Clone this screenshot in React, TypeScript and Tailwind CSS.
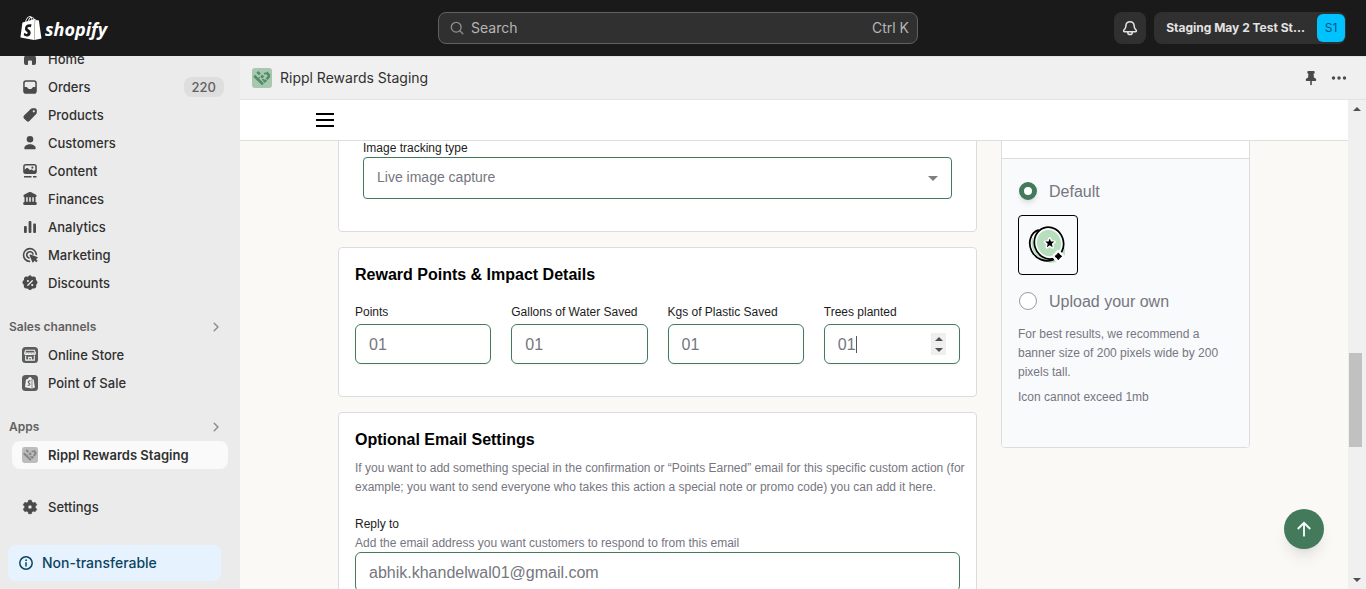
import React, { ReactNode } from "react";
import { SiShopify } from "react-icons/si";

const inter = "font-['Inter',sans-serif]";
const body = "font-['Liberation_Sans',Arial,sans-serif]";

function Glyph({ children }: { children: ReactNode }) {
  return (
    <svg viewBox="0 0 20 20" className="size-5 shrink-0" fill="#4a4a4a" aria-hidden="true">
      {children}
    </svg>
  );
}

const icons = {
  home: (
    <Glyph>
      <path d="M9 3.600a1.500 1.500 0 0 1 2 0l4.300 3.600c.5.400.7 1 .7 1.600V14a2 2 0 0 1-2 2h-1.300a.7.700 0 0 1-.7-.700V12.500a1 1 0 0 0-1-1H9a1 1 0 0 0-1 1v2.800a.7.700 0 0 1-.7.700H6a2 2 0 0 1-2-2V8.800c0-.600.2-1.200.7-1.600z" />
    </Glyph>
  ),
  orders: (
    <Glyph>
      <path
        fillRule="evenodd"
        d="M6 3.300h8A2.800 2.800 0 0 1 16.800 6.100V13.900A2.800 2.800 0 0 1 14 16.700H6A2.800 2.800 0 0 1 3.200 13.900V6.100A2.800 2.800 0 0 1 6 3.300zM6.100 4.800A1.400 1.400 0 0 0 4.700 6.200V10H6.500C7.600 10 7.800 11.900 8.900 11.900H11.100C12.200 11.900 12.400 10 13.500 10H15.300V6.200A1.400 1.400 0 0 0 13.900 4.800z"
      />
    </Glyph>
  ),
  products: (
    <Glyph>
      <path
        fillRule="evenodd"
        d="M11 3.800c.4-.4.900-.6 1.500-.6h2.400c1.100 0 1.900.8 1.900 1.900v2.400c0 .6-.2 1.100-.6 1.500l-6.800 7a2 2 0 0 1-2.800 0L4 13.400a2 2 0 0 1 0-2.800zM13.800 7.400a1.100 1.100 0 1 0 0-2.200 1.100 1.100 0 0 0 0 2.200z"
      />
    </Glyph>
  ),
  customers: (
    <Glyph>
      <circle cx="10" cy="6.300" r="3.300" />
      <path d="M4.300 15.200c0-2.400 2.800-4 5.700-4s5.700 1.600 5.700 4c0 .6-.4 1-1 1H5.300c-.6 0-1-.4-1-1z" />
    </Glyph>
  ),
  content: (
    <Glyph>
      <path
        fillRule="evenodd"
        d="M5.700 3h8.600a2.500 2.500 0 0 1 2.500 2.500v5a2.500 2.500 0 0 1-2.500 2.500H5.700a2.500 2.500 0 0 1-2.500-2.500v-5A2.500 2.500 0 0 1 5.700 3zm0 1.500c-.6 0-1 .4-1 1v3.200l1.800-1.600c.4-.3.900-.3 1.300 0L10 9.300l.9-.7c.4-.3 1-.3 1.400.1l.8.7c.8.500 1.500.1 2.200-.3V5.500c0-.6-.4-1-1-1z"
      />
      <circle cx="12.400" cy="6.600" r="1.100" />
      <path d="M4 14.900h7.500v1.500H4zM13 14.900h3.500v1.500H13z" />
    </Glyph>
  ),
  finances: (
    <Glyph>
      <path d="M9.300 3.100a1.600 1.600 0 0 1 1.400 0l4.900 2.300c.6.300 1 .8 1 1.400 0 .8-.6 1.400-1.400 1.400H4.800c-.8 0-1.400-.6-1.400-1.400 0-.6.400-1.100 1-1.400z" />
      <path d="M4.500 8h1.700v5H4.500zM7.700 8h1.500v5H7.700zM10.800 8h1.500v5h-1.500zM13.800 8h1.700v5h-1.700zM4.500 12.700h11c.7 0 1.300.9 1.300 1.900 0 .8-.4 1.400-1 1.400H4.200c-.6 0-1-.6-1-1.400 0-1 .6-1.900 1.300-1.900z" />
    </Glyph>
  ),
  analytics: (
    <Glyph>
      <rect x="4" y="9" width="2.800" height="7" rx="1" />
      <rect x="8.600" y="4" width="2.800" height="12" rx="1" />
      <rect x="13.200" y="6.500" width="2.800" height="9.500" rx="1" />
    </Glyph>
  ),
  marketing: (
    <Glyph>
      <path
        d="M16.300 9.500A6.400 6.400 0 1 0 9.500 16.400M13 9A3.200 3.200 0 1 0 9 13"
        fill="none"
        stroke="#4a4a4a"
        strokeWidth="1.600"
        strokeLinecap="round"
      />
      <path d="M9.600 10.500c-.2-.5.300-1.100.9-.9l6.800 2.300c.7.200.7 1.100.1 1.400l-1.400.7 1.700 1.700-1.600 1.600-1.700-1.700-.7 1.400c-.3.600-1.200.6-1.400-.1z" />
    </Glyph>
  ),
  discounts: (
    <Glyph>
      <path d="M8.300 3.400a2.200 2.200 0 0 1 3.400 0l.6.300.8-.1a2.200 2.200 0 0 1 2.800 2.600l.1.800.5.500a2.300 2.300 0 0 1 .2 3.600l-.4.600-.1 1a2.200 2.200 0 0 1-2.700 2.700l-1 .1-.6.500a2.300 2.300 0 0 1-3.800 0l-.6-.5-1-.1a2.200 2.200 0 0 1-2.600-2.700l-.2-1-.5-.600a2.300 2.300 0 0 1 .2-3.600l.5-.5.1-.8a2.200 2.200 0 0 1 2.700-2.600l.8.1z" />
      <path d="M7.800 12.300l4.500-4.600" stroke="#ebebeb" strokeWidth="1.300" strokeLinecap="round" />
      <circle cx="7.900" cy="8" r="1.050" fill="#ebebeb" />
      <circle cx="12.200" cy="12.100" r="1.050" fill="#ebebeb" />
    </Glyph>
  ),
  store: (
    <Glyph>
      <rect x="2" y="2" width="16" height="16" rx="3.500" fill="#5a5c5e" />
      <path
        d="M5.600 5.200h8.800l1 3c0 1.800-2.700 1.800-2.700 0 0 1.800-2.700 1.800-2.700 0 0 1.800-2.700 1.800-2.700 0 0 1.800-2.700 1.800-2.700 0zM5.700 10.500v4.600h8.600v-4.600M8.700 15v-2.600h2.600V15M5 8h10"
        fill="none"
        stroke="#f1f1f1"
        strokeWidth="1.100"
      />
    </Glyph>
  ),
  pos: (
    <Glyph>
      <rect x="2" y="2" width="16" height="16" rx="3.500" fill="#5a5c5e" />
      <path d="M6 6.500l2-.5c.5-2 3-2.700 3.600-.8l.6.800 1.400.4 1.300 8.200-3 .9-6.900-1.200z" fill="#f1f1f1" />
      <path
        d="M10.600 8.100c-1.400-.6-2.500.1-2.300 1.100.2 1 1.900 1.100 1.700 2.300-.2 1-1.500 1-2.300.3"
        fill="none"
        stroke="#5a5c5e"
        strokeWidth="1.100"
      />
      <path d="M12 6v9" stroke="#5a5c5e" strokeWidth=".7" />
    </Glyph>
  ),
  settings: (
    <Glyph>
      <path
        fillRule="evenodd"
        d="M8.700 3.300h2.600l.6 2 1.300.7 2-.5 1.500 2.300-1.400 1.500v1.400l1.400 1.500-1.500 2.300-2-.5-1.300.7-.6 2H8.700l-.6-2-1.300-.7-2 .5-1.500-2.300 1.400-1.500V9.300L3.300 7.800l1.500-2.300 2 .5 1.300-.7zM10 12.100a2.100 2.100 0 1 0 0-4.200 2.100 2.100 0 0 0 0 4.200z"
        stroke="#4a4a4a"
        strokeWidth=".8"
        strokeLinejoin="round"
      />
    </Glyph>
  ),
};

function RipplMark({ bg, fg, className }: { bg: string; fg: string; className: string }) {
  return (
    <svg viewBox="0 0 20 20" className={className} aria-hidden="true">
      <rect width="20" height="20" rx="3" fill={bg} />
      <g fill="none" stroke={fg} strokeWidth="2.600">
        <path d="M2.200 7.800l8.800 8.600M5.300 3.800l2.600 2.600M11.800 14.200l2.400-2.400M14.800 11.200l2.600-3.400M14.400 4.300l3.200 3.600" />
      </g>
      <g fill={fg}>
        <circle cx="10.200" cy="8.600" r="1.600" />
        <circle cx="12.900" cy="5.600" r="1.100" />
        <circle cx="7.300" cy="9.800" r=".8" />
        <circle cx="11" cy="11.800" r="1" />
      </g>
    </svg>
  );
}

function NavItem({ icon, label, badge, active }: { icon: ReactNode; label: string; badge?: string; active?: boolean }) {
  return (
    <li className="px-3">
      <a
        href="#"
        className={
          active
            ? "flex h-7 items-center gap-2 rounded-lg bg-[#fafafa] pl-2 pr-1 font-semibold"
            : "flex h-7 items-center gap-2 rounded-lg pl-2 pr-1 font-medium"
        }
      >
        {icon}
        <span className="flex-1 pt-0.5">{label}</span>
        {badge && <span className="h-5 rounded-lg bg-[#dedede] px-2 leading-5 font-medium text-[#616161]">{badge}</span>}
      </a>
    </li>
  );
}

function SectionHeader({ label }: { label: string }) {
  return (
    <a href="#" className="mt-4 flex h-7 items-center justify-between pr-[19px] pl-[9px] text-xs font-semibold text-[#616161]">
      {label}
      <svg viewBox="0 0 10 10" className="size-2.5" fill="none" stroke="#8a8a8a" strokeWidth="1.400" strokeLinecap="round" strokeLinejoin="round" aria-hidden="true">
        <path d="M3.200 1.200L7 5 3.200 8.800" />
      </svg>
    </a>
  );
}

function TopBar() {
  return (
    <header className="grid h-14 shrink-0 grid-cols-[1fr_480px_1fr] items-center bg-[#1a1a1a] pr-2.5">
      <a href="#" aria-label="Shopify home" className="ml-[19px] flex w-fit items-center gap-0.5 text-white">
        <SiShopify className="size-6" />
        <span className="pt-px font-['Open_Sans',sans-serif] text-lg leading-6 font-bold italic">shopify</span>
      </a>
      <label className="flex h-8 items-center rounded-lg border border-[#616161] bg-[#303030] px-2">
        <svg viewBox="0 0 20 20" className="size-5" fill="none" stroke="#8f8f8f" strokeWidth="1.300" strokeLinecap="round" aria-hidden="true">
          <circle cx="9.200" cy="9.200" r="4.900" />
          <path d="M12.800 12.800l3 3" />
        </svg>
        <input type="search" aria-label="Search" placeholder="Search" className="ml-1 min-w-0 flex-1 bg-transparent text-sm text-white outline-none placeholder:text-[#b5b5b5]" />
        <kbd className="font-['Inter',sans-serif] text-sm text-[#b5b5b5]">Ctrl K</kbd>
      </label>
      <div className="flex items-center justify-end gap-2 pr-2.5">
        <button type="button" aria-label="Notifications" className="flex size-8 items-center justify-center rounded-lg bg-[#303030]">
          <svg viewBox="0 0 20 20" className="size-5" fill="none" stroke="#e3e3e3" strokeWidth="1.500" strokeLinejoin="round" aria-hidden="true">
            <path d="M10 3.700c-2.500 0-3.900 1.700-4.100 3.900-.1 1.800-.3 2.600-1.300 3.700l-.7.800c-.6.700-.2 1.700.7 1.700h10.800c.9 0 1.300-1 .7-1.700l-.7-.8c-1-1.100-1.200-1.900-1.300-3.700-.2-2.200-1.600-3.900-4.100-3.900z" />
            <path d="M7.800 14v.4c0 1.200 1 2.100 2.200 2.100s2.200-.9 2.200-2.100V14" />
          </svg>
        </button>
        <button type="button" className="flex h-8 items-center gap-3 rounded-lg bg-[#303030] pr-px pl-3 text-[#e3e3e3]">
          <span className="text-xs font-bold">Staging May 2 Test St...</span>
          <span className="flex size-7 items-center justify-center rounded-md bg-[#00c2ff] text-xs text-[#00527c]">S1</span>
        </button>
      </div>
    </header>
  );
}

function Sidebar() {
  return (
    <nav aria-label="Main" className="w-60 shrink-0 overflow-hidden bg-[#ebebeb] text-[13px] text-[#303030]">
      <ul className="-mt-[11px]">
        <NavItem icon={icons.home} label="Home" />
        <NavItem icon={icons.orders} label="Orders" badge="220" />
        <NavItem icon={icons.products} label="Products" />
        <NavItem icon={icons.customers} label="Customers" />
        <NavItem icon={icons.content} label="Content" />
        <NavItem icon={icons.finances} label="Finances" />
        <NavItem icon={icons.analytics} label="Analytics" />
        <NavItem icon={icons.marketing} label="Marketing" />
        <NavItem icon={icons.discounts} label="Discounts" />
      </ul>
      <SectionHeader label="Sales channels" />
      <ul>
        <NavItem icon={icons.store} label="Online Store" />
        <NavItem icon={icons.pos} label="Point of Sale" />
      </ul>
      <SectionHeader label="Apps" />
      <ul>
        <NavItem active icon={<RipplMark bg="#bdbdbd" fg="#858585" className="mx-0.5 size-4" />} label="Rippl Rewards Staging" />
      </ul>
      <ul className="mt-6">
        <NavItem icon={icons.settings} label="Settings" />
      </ul>
      <div className="mt-6 mr-[19px] ml-2 flex h-9 items-center gap-1.5 rounded-lg bg-[#e6f3ff] pl-2 text-sm font-medium text-[#0b4461]">
        <svg viewBox="0 0 20 20" className="size-5" fill="none" stroke="#0b4461" strokeWidth="1.500" strokeLinecap="round" aria-hidden="true">
          <circle cx="10" cy="10" r="6.200" />
          <path d="M10 9.700v3.300" />
          <circle cx="10" cy="7.200" r=".5" fill="#0b4461" strokeWidth=".8" />
        </svg>
        Non-transferable
      </div>
    </nav>
  );
}

const cardClass = "rounded border border-[#dcdcde] bg-white";
const fieldClass =
  "block h-10 w-full appearance-none rounded-md border border-[#427a5b] bg-white px-[13px] pt-0.5 text-base text-[#767680] outline-none";

const impactFields = [
  { id: "points", label: "Points" },
  { id: "water", label: "Gallons of Water Saved" },
  { id: "plastic", label: "Kgs of Plastic Saved" },
  { id: "trees", label: "Trees planted", editing: true },
];

function ImpactField({ id, label, editing }: { id: string; label: string; editing?: boolean }) {
  return (
    <div>
      <label htmlFor={id} className="mb-[3px] block text-xs leading-[18px] text-[#1c1c22]">
        {label}
      </label>
      <div className="relative">
        <input
          id={id}
          type="number"
          defaultValue="01"
          className={`${fieldClass} shadow-xs [&::-webkit-inner-spin-button]:appearance-none`}
        />
        {editing && (
          <>
            <span className="absolute top-3 left-8 h-[17px] w-px bg-[#55555d]" aria-hidden="true" />
            <span className="absolute top-[9px] right-3.5 flex w-[15px] flex-col bg-[#efefef]">
              <button type="button" aria-label="Increase" className="flex h-[11px] items-center justify-center">
                <svg viewBox="0 0 8 4" className="h-1 w-2" fill="#505050"><path d="M0 4l4-4 4 4z" /></svg>
              </button>
              <button type="button" aria-label="Decrease" className="flex h-[11px] items-center justify-center">
                <svg viewBox="0 0 8 4" className="h-1 w-2" fill="#505050"><path d="M0 0l4 4 4-4z" /></svg>
              </button>
            </span>
          </>
        )}
      </div>
    </div>
  );
}

function CoinArt() {
  return (
    <svg viewBox="0 0 60 60" className="size-full" aria-hidden="true">
      <ellipse cx="31.500" cy="28.500" rx="14" ry="15" fill="#b7dfbd" />
      <path d="M14 22c-3 9 1 18 9 22l9 4.500 7-1-5-3c-11 0-18-8-19-19z" fill="#b7dfbd" />
      <path d="M44.500 38l3-5v8z" fill="#b7dfbd" />
      <ellipse cx="31" cy="28" rx="13.600" ry="15" transform="rotate(-18 31 28)" fill="none" stroke="#f9fafc" strokeWidth="2.500" />
      <g fill="none" stroke="#000" strokeWidth="1.800">
        <ellipse cx="31" cy="28" rx="15" ry="16.600" transform="rotate(-18 31 28)" />
        <path d="M20.500 14.300C11.500 17 9 28 13 36c4.500 9 14 12.500 23.500 9" />
      </g>
      <path
        d="M31.800 23.300l1.500 2.900 3.300.5-2.300 2.300.5 3.300-3-1.500-3 1.500.5-3.300-2.300-2.300 3.300-.5z"
        fill="#f9fafc"
        stroke="#f9fafc"
        strokeWidth="3"
        strokeLinejoin="round"
      />
      <path d="M31.800 23.200l1.200 3.100 3.500.2-2.600 2.300.9 3.500-3-2-3 2 .9-3.500-2.600-2.300 3.500-.2z" fill="#000" />
      <path d="M40.700 37l4.500 4.700-4.500 4.700-4.500-4.700z" fill="#f9fafc" stroke="#f9fafc" strokeWidth="4" strokeLinejoin="round" />
      <path d="M40.700 38.200l1.500 2 2 1.500-2 1.500-1.500 2-1.500-2-2-1.500 2-1.500z" fill="#000" stroke="#000" strokeWidth="1" strokeLinejoin="round" />
    </svg>
  );
}

const radioClass =
  "mx-px size-[18px] appearance-none rounded-full border border-[#9a9aa0] bg-white checked:border-[5px] checked:border-[#427a5b] checked:shadow-md";

function IconPanel() {
  return (
    <aside className={`${cardClass} w-[249px] shrink-0 overflow-hidden`}>
      <div className="h-[33px] border-b border-[#dcdcde]" />
      <div className="bg-[#f9fafc] px-4 pt-5 pb-10 text-xs leading-[19px] text-[#767680]">
        <label className="flex h-6 items-center gap-[11px] text-base">
          <input type="radio" name="icon" defaultChecked className={radioClass} />
          <span className="pt-0.5">Default</span>
        </label>
        <div className="mt-3 size-[60px] rounded border border-black">
          <CoinArt />
        </div>
        <label className="mt-3.5 flex h-6 items-center gap-[11px] text-base">
          <input type="radio" name="icon" className={radioClass} />
          <span className="pt-0.5">Upload your own</span>
        </label>
        <p className="mt-3">For best results, we recommend a banner size of 200 pixels wide by 200 pixels tall.</p>
        <p className="mt-1.5">Icon cannot exceed 1mb</p>
      </div>
    </aside>
  );
}

function Scrollbar() {
  return (
    <div className="flex w-[18px] shrink-0 flex-col items-center bg-[#f0f0f0]" aria-hidden="true">
      <svg viewBox="0 0 8 4" className="my-[7px] h-1 w-2" fill="#505050"><path d="M0 4l4-4 4 4z" /></svg>
      <div className="flex-[235]" />
      <div className="mr-1 h-[94px] w-[13px] bg-[#c1c1c1]" />
      <div className="flex-[124]" />
      <svg viewBox="0 0 8 4" className="my-[7px] h-1 w-2" fill="#505050"><path d="M0 0l4 4 4-4z" /></svg>
    </div>
  );
}

function Content() {
  return (
    <div className="mx-auto -mt-4 flex w-full max-w-[912px] items-start gap-6">
      <div className="flex min-w-0 flex-1 flex-col gap-[15px]">
        <section className={`${cardClass} px-6 pt-[13px] pb-8`}>
          <label htmlFor="tracking" className="block text-xs leading-[18px] text-[#1c1c22]">
            Image tracking type
          </label>
          <div className="relative">
            <select id="tracking" className="block h-[42px] w-full appearance-none rounded border border-[#427a5b] bg-white px-[13px] pb-0.5 text-sm text-[#767680]">
              <option>Live image capture</option>
            </select>
            <svg viewBox="0 0 10 5" className="pointer-events-none absolute top-[19px] right-3.5 h-[5px] w-2.5" fill="#808080" aria-hidden="true">
              <path d="M0 0h10L5 5z" />
            </svg>
          </div>
        </section>

        <section className={`${cardClass} px-4 pt-[15px] pb-8`}>
          <h2 className="text-base font-bold">Reward Points &amp; Impact Details</h2>
          <div className="mt-4 grid grid-cols-4 gap-5">
            {impactFields.map((f) => (
              <ImpactField key={f.id} {...f} />
            ))}
          </div>
        </section>

        <section className={`${cardClass} px-4 pt-[15px] pb-8`}>
          <h2 className="text-base font-bold">Optional Email Settings</h2>
          <p className="mt-[7px] text-xs leading-[19px] text-[#767680] lg:whitespace-nowrap">
            If you want to add something special in the confirmation or “Points Earned” email for this specific custom action (for{" "}
            <br className="hidden lg:block" />
            example; you want to send everyone who takes this action a special note or promo code) you can add it here.
          </p>
          <label htmlFor="reply" className="mt-[17px] block text-xs leading-5 text-[#1c1c22]">
            Reply to
          </label>
          <p className="text-xs leading-[18px] text-[#767680]">Add the email address you want customers to respond to from this email</p>
          <input id="reply" type="email" defaultValue="abhik.khandelwal01@gmail.com" className={fieldClass} />
        </section>
      </div>
      <IconPanel />
    </div>
  );
}

export default function App() {
  return (
    <div className={`${inter} flex h-screen flex-col overflow-hidden`}>
      <TopBar />
      <div className="flex min-h-0 flex-1">
        <Sidebar />
        <main className="flex min-w-0 flex-1 flex-col">
          <div className="flex h-11 shrink-0 items-center border-y border-[#e3e3e3] bg-[#f0f0f0] pr-[17px] pl-3 text-[#303030]">
            <RipplMark bg="#a9c6ae" fg="#4e8d69" className="size-5" />
            <h1 className="ml-2 flex-1 text-sm">Rippl Rewards Staging</h1>
            <button type="button" aria-label="Pin app">
              <svg viewBox="0 0 20 20" className="size-5" fill="#4a4a4a" aria-hidden="true">
                <path d="M7.200 3h5.600c.5 0 .8.300.8.800v1.100c0 .5-.3.800-.8.800h-.2l.3 3.800c1.400.5 2.300 1.200 2.300 2.300v.400c0 .4-.3.700-.7.700h-3.700v3.500a.8.800 0 0 1-1.600 0v-3.500H5.500a.7.700 0 0 1-.7-.7v-.4c0-1.100.9-1.800 2.300-2.300l.3-3.800h-.2c-.5 0-.8-.3-.8-.8V3.800c0-.5.300-.8.8-.8z" />
              </svg>
            </button>
            <button type="button" aria-label="More actions" className="ml-2">
              <svg viewBox="0 0 20 20" className="size-5" fill="#4a4a4a" aria-hidden="true">
                <circle cx="4.500" cy="10" r="1.700" />
                <circle cx="10" cy="10" r="1.700" />
                <circle cx="15.500" cy="10" r="1.700" />
              </svg>
            </button>
          </div>
          <div className={`${body} flex min-h-0 flex-1 text-black`}>
            <div className="flex min-w-0 flex-1 flex-col bg-[#faf9f5]">
              <div className="z-10 flex h-[41px] shrink-0 items-center border-b border-[#dfdfdf] bg-white pl-[76px]">
                <button type="button" aria-label="Open menu" className="flex flex-col gap-1">
                  <span className="h-0.5 w-[18px] bg-black" />
                  <span className="h-0.5 w-[18px] bg-black" />
                  <span className="h-0.5 w-[18px] bg-black" />
                </button>
              </div>
              <div className="min-h-0 flex-1 overflow-hidden">
                <Content />
              </div>
            </div>
            <Scrollbar />
          </div>
        </main>
      </div>
      <button type="button" aria-label="Back to top" className="fixed right-[42px] bottom-10 flex size-10 items-center justify-center rounded-full bg-[#427a5b] shadow-lg">
        <svg viewBox="0 0 16 16" className="size-4" fill="none" stroke="#fff" strokeWidth="1.800" aria-hidden="true">
          <path d="M8 15.500V2M1.800 8L8 1.800 14.200 8" />
        </svg>
      </button>
    </div>
  );
}
